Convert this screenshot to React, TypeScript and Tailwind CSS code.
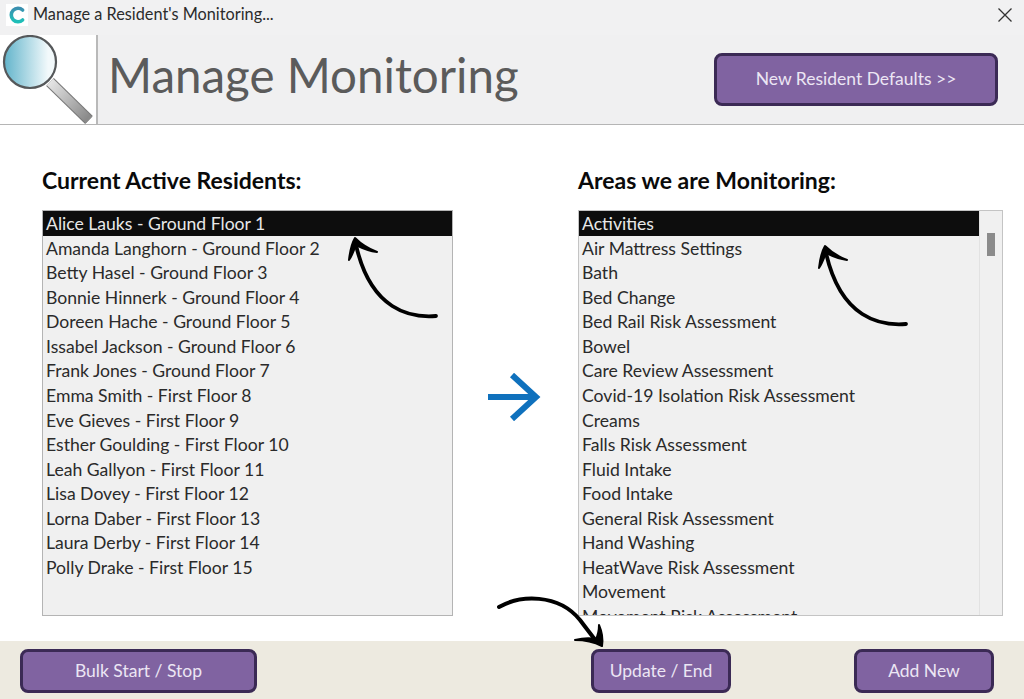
const residents = [
  "Alice Lauks - Ground Floor 1",
  "Amanda Langhorn - Ground Floor 2",
  "Betty Hasel - Ground Floor 3",
  "Bonnie Hinnerk - Ground Floor 4",
  "Doreen Hache - Ground Floor 5",
  "Issabel Jackson - Ground Floor 6",
  "Frank Jones - Ground Floor 7",
  "Emma Smith - First Floor 8",
  "Eve Gieves - First Floor 9",
  "Esther Goulding - First Floor 10",
  "Leah Gallyon - First Floor 11",
  "Lisa Dovey - First Floor 12",
  "Lorna Daber - First Floor 13",
  "Laura Derby - First Floor 14",
  "Polly Drake - First Floor 15",
];

const areas = [
  "Activities",
  "Air Mattress Settings",
  "Bath",
  "Bed Change",
  "Bed Rail Risk Assessment",
  "Bowel",
  "Care Review Assessment",
  "Covid-19 Isolation Risk Assessment",
  "Creams",
  "Falls Risk Assessment",
  "Fluid Intake",
  "Food Intake",
  "General Risk Assessment",
  "Hand Washing",
  "HeatWave Risk Assessment",
  "Movement",
  "Movement Risk Assessment",
];

function Row({ label, selected }: { label: string; selected: boolean }) {
  return (
    <div
      className={
        selected
          ? "h-[24.57px] shrink-0 bg-[#0d0d0d] pl-[3px] leading-[26px] whitespace-nowrap text-[#e8e8e8]"
          : "h-[24.57px] shrink-0 pl-[3px] leading-[26px] whitespace-nowrap text-[#2a2a2a]"
      }
    >
      {label}
    </div>
  );
}

function PurpleButton({ label, className }: { label: string; className: string }) {
  return (
    <button
      className={`flex items-center justify-center rounded-[8px] border-[3px] border-[#3b2a55] bg-[#8063a1] text-[17.5px] text-[#ece6f4] ${className}`}
    >
      {label}
    </button>
  );
}

function CurvedArrow({ className }: { className: string }) {
  return (
    <svg className={className} width="100" height="90" viewBox="0 0 100 90" fill="none">
      <path
        d="M95 83 C70 85 30 78 15 12"
        stroke="#000"
        strokeWidth="3.8"
        strokeLinecap="round"
      />
      <path
        d="M8 27 C9 18 11 10 14 5 C20 11 28 16 36 19 C28 18 21 15 15 12 C13 17 11 23 8 27 Z"
        fill="#000"
        stroke="#000"
        strokeWidth="2"
        strokeLinejoin="round"
      />
    </svg>
  );
}

export default function App() {
  return (
    <div
      className="relative flex h-[699px] w-[1024px] flex-col overflow-hidden bg-white"
      style={{ fontFamily: "Lato, 'Noto Sans', sans-serif" }}
    >
      {/* Title bar */}
      <div className="flex h-[35px] shrink-0 items-center bg-[#f1f1f2] pb-[6px] pl-[6px] pr-[12px]">
        <div className="flex h-[22px] w-[22px] items-center justify-center bg-white">
          <svg width="18" height="18" viewBox="0 0 16 16" fill="none">
            <defs>
              <linearGradient id="logo" x1="0" y1="0" x2="0" y2="1">
                <stop offset="0" stopColor="#3b8fb0" />
                <stop offset="1" stopColor="#1fc0b8" />
              </linearGradient>
            </defs>
            <path
              d="M13 3.6 A6 6 0 1 0 13 12.4"
              stroke="url(#logo)"
              strokeWidth="3.2"
              strokeLinecap="round"
            />
          </svg>
        </div>
        <span className="ml-[5px] text-[16.3px] text-[#2b2b2b]">Manage a Resident's Monitoring...</span>
        <svg className="ml-auto" width="14" height="14" viewBox="0 0 14 14" stroke="#333" strokeWidth="1.3">
          <path d="M0.5 0.5 L13.5 13.5 M13.5 0.5 L0.5 13.5" />
        </svg>
      </div>

      {/* Header */}
      <div className="flex h-[90px] shrink-0 items-center border-b border-[#b5b5b5] bg-[#f0f0f1]">
        <div className="flex h-full w-[98px] shrink-0 border-r-2 border-[#b9b9b9] bg-white">
          <svg width="96" height="89" viewBox="0 0 96 89" fill="none">
            <defs>
              <linearGradient id="lens" x1="0" y1="0" x2="1" y2="0">
                <stop offset="0" stopColor="#62b4cb" />
                <stop offset="0.85" stopColor="#f2f9fb" />
              </linearGradient>
              <linearGradient id="handle" x1="0" y1="0" x2="1" y2="0.9">
                <stop offset="0" stopColor="#e5e5e5" />
                <stop offset="1" stopColor="#8a8a8a" />
              </linearGradient>
            </defs>
            <path d="M50 47 L89 85" stroke="#777" strokeWidth="11" />
            <path d="M50 47 L89 85" stroke="url(#handle)" strokeWidth="9" />
            <circle cx="30" cy="27" r="26" fill="url(#lens)" stroke="#55585a" strokeWidth="2.2" />
          </svg>
        </div>
        <h1 className="mb-[10px] ml-[10px] text-[47.5px] leading-none text-[#5b5b5b]">Manage Monitoring</h1>
        <PurpleButton label="New Resident Defaults >>" className="ml-auto mr-[26px] h-[53px] w-[284px]" />
      </div>

      {/* Lists */}
      <div className="flex flex-1 pl-[42px] pt-[40px]">
        <div className="flex w-[411px] shrink-0 flex-col">
          <h2 className="h-[45px] text-[23px] leading-[30px] font-bold text-[#0a0a0a]">Current Active Residents:</h2>
          <div className="flex h-[406px] flex-col overflow-hidden border border-[#b4b4b4] bg-[#f0f0f0] text-[17.6px]">
            {residents.map((r, i) => (
              <Row key={r} label={r} selected={i === 0} />
            ))}
          </div>
        </div>

        <div className="flex w-[125px] shrink-0 justify-center pt-[208px]">
          <svg className="ml-[-4px]" width="54" height="48" viewBox="0 0 54 48" fill="none" stroke="#0f71bd">
            <path d="M1 24 H49" strokeWidth="6" />
            <path d="M25 2 L49 24 L25 46" strokeWidth="6" />
          </svg>
        </div>

        <div className="flex w-[425px] shrink-0 flex-col">
          <h2 className="h-[45px] text-[23px] leading-[30px] font-bold text-[#0a0a0a]">Areas we are Monitoring:</h2>
          <div className="flex h-[406px] overflow-hidden border border-[#c4c4c4] bg-[#f0f0f0] text-[17.6px]">
            <div className="flex min-w-0 flex-1 flex-col">
              {areas.map((a, i) => (
                <Row key={a} label={a} selected={i === 0} />
              ))}
            </div>
            <div className="w-[23px] shrink-0 border-l border-[#e2e2e2] bg-[#f0f0f0] pl-[7px] pt-[22px]">
              <div className="h-[23px] w-[8px] bg-[#8b8b8b]" />
            </div>
          </div>
        </div>
      </div>

      {/* Footer */}
      <div className="flex h-[58px] shrink-0 items-center bg-[#edeae0] pl-[20px] pt-[2px]">
        <PurpleButton label="Bulk Start / Stop" className="h-[44px] w-[237px]" />
        <PurpleButton label="Update / End" className="ml-[334px] h-[44px] w-[140px]" />
        <PurpleButton label="Add New" className="ml-[123px] h-[44px] w-[140px]" />
      </div>

      {/* Hand drawn annotation arrows */}
      <CurvedArrow className="absolute left-[341px] top-[233px]" />
      <CurvedArrow className="absolute left-[811px] top-[241px]" />
      <svg className="absolute left-[490px] top-[590px]" width="130" height="62" viewBox="0 0 130 62" fill="none">
        <path d="M9 17 C30 5 68 3 90 30 C96 38 100 43 106 51" stroke="#000" strokeWidth="4" strokeLinecap="round" />
        <path
          d="M109 35 C112 42 113 50 112 56 C104 52 95 50 85 50 C93 48 101 48 106 49 C108 45 109 40 109 35 Z"
          fill="#000"
          stroke="#000"
          strokeWidth="2"
          strokeLinejoin="round"
        />
      </svg>
    </div>
  );
}
